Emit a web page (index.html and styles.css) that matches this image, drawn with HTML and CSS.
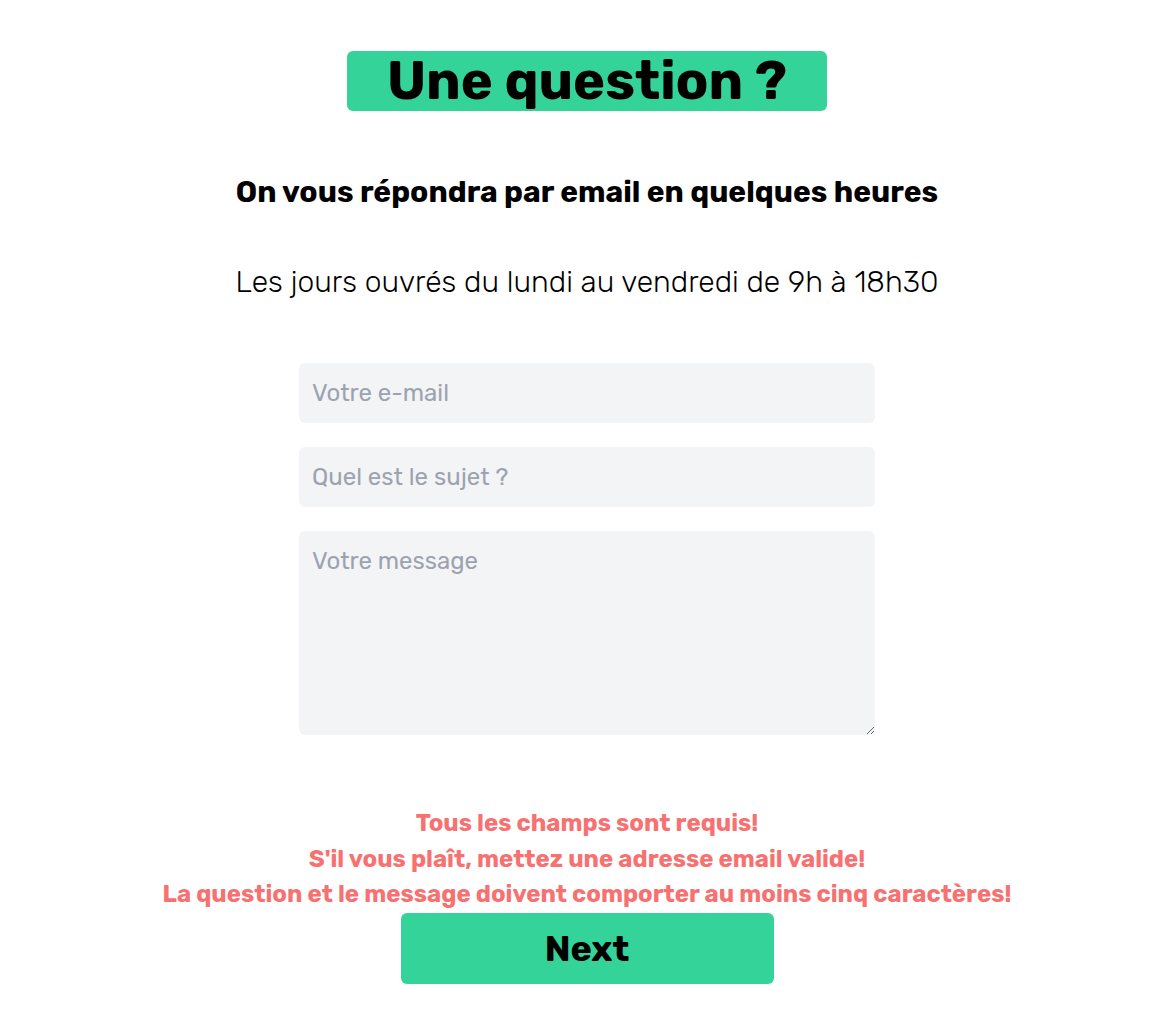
FILE: index.html
```html
<!DOCTYPE html>
<html lang="fr">
<head>
<meta charset="utf-8">
<title>Une question ?</title>
<link rel="stylesheet" href="styles.css">
</head>
<body>
<main class="page">
  <h1 class="title">Une question ?</h1>
  <h2 class="subtitle">On vous répondra par email en quelques heures</h2>
  <p class="hours">Les jours ouvrés du lundi au vendredi de 9h à 18h30</p>
  <form class="form">
    <input class="field" type="email" placeholder="Votre e-mail">
    <input class="field" type="text" placeholder="Quel est le sujet ?">
    <textarea class="field area" placeholder="Votre message"></textarea>
  </form>
  <div class="errors">
    <p class="error">Tous les champs sont requis!</p>
    <p class="error">S'il vous plaît, mettez une adresse email valide!</p>
    <p class="error">La question et le message doivent comporter au moins cinq caractères!</p>
  </div>
  <button class="next" type="button">Next</button>
</main>
</body>
</html>
```
FILE: styles.css
```css
* { box-sizing: border-box; }
body {
  margin: 0;
  background: #fff;
  font-family: Rubik, Inter, "Noto Sans", sans-serif;
  color: #000;
}
.page {
  display: flex;
  flex-direction: column;
  align-items: center;
  padding: 51px 0 0 2px;
}
.title {
  margin: 0;
  width: 480px;
  height: 60px;
  background: #34d399;
  border-radius: 6px;
  font-size: 54px;
  font-weight: 700;
  line-height: 60px;
  text-align: center;
}
.subtitle {
  margin: 63px 0 0;
  font-size: 30px;
  font-weight: 700;
  line-height: 36px;
}
.hours {
  margin: 54px 0 0;
  font-size: 30px;
  font-weight: 300;
  line-height: 36px;
}
.form {
  margin-top: 63px;
  width: 576px;
  display: flex;
  flex-direction: column;
  gap: 24px;
}
.field {
  display: block;
  width: 100%;
  height: 60px;
  border: 0;
  border-radius: 6px;
  background: #f3f4f6;
  padding: 0 13px;
  font-family: inherit;
  font-size: 24px;
  color: #111;
  outline: none;
}
.field::placeholder { color: #9ca3af; }
.area {
  height: 204px;
  padding-top: 16px;
  resize: vertical;
}
.errors {
  margin-top: 71px;
  text-align: center;
}
.error {
  margin: 0;
  color: #f87171;
  font-size: 24px;
  font-weight: 700;
  line-height: 35.5px;
}
.next {
  margin-top: 0;
  width: 373px;
  height: 71px;
  border: 0;
  border-radius: 6px;
  background: #34d399;
  font-family: inherit;
  font-size: 36px;
  font-weight: 700;
  color: #000;
}
```
